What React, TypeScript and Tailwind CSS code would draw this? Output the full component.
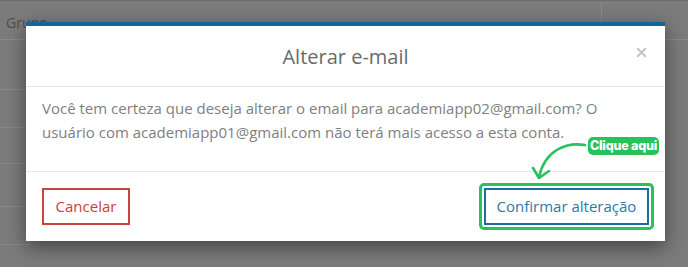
import React from 'react';
import { X } from 'lucide-react';

const font = { fontFamily: '"Open Sans", "Liberation Sans", sans-serif' };

const App: React.FC = () => {
  return (
    <div className="relative w-[688px] h-[267px] overflow-hidden bg-[#7b7b7b]" style={font}>
      {/* dimmed page behind the dialog */}
      <div className="flex flex-col">
        <div className="h-[3px] bg-[#717171] border-b border-[#858585]" />
        <div className="flex h-[37px] border-b border-[#8a8a8a]">
          <div className="flex-1 flex items-center pl-[6px] pt-[3px] text-[14px] text-[#4c4c4c]">Grupo</div>
          <div className="w-[87px] border-l border-[#8a8a8a]" />
        </div>
        <div className="w-[30px] h-[50px] border-b border-[#888]" />
        <div className="w-[30px] h-[38px] border-b border-[#888]" />
        <div className="w-[30px] h-[36px] border-b border-[#888]" />
        <div className="w-[30px] h-[43px] border-b border-[#888]" />
        <div className="w-[30px] h-[38px] border-b border-[#888]" />
      </div>

      {/* dialog */}
      <div className="absolute left-[26px] top-[22px] w-[639px] bg-white border-t-4 border-[#14659c] shadow-[0_6px_18px_rgba(0,0,0,0.45)]">
        <div className="relative h-[61px] flex items-center justify-center border-b border-[#e6e6e6]">
          <h2 className="text-[20px] text-[#6a6a6a] pt-[1px]">Alterar e-mail</h2>
          <button className="absolute right-[16px] top-[19px] text-[#c4c4c4]">
            <X size={15} strokeWidth={3} />
          </button>
        </div>

        <div className="pl-[16px] pr-[20px] pt-[9px] pb-[27px]">
          <p className="text-[15px] leading-[24px] text-[#808080]">
            Você tem certeza que deseja alterar o email para academiapp02@gmail.com? O usuário com academiapp01@gmail.com não terá mais acesso a esta conta.
          </p>
        </div>

        <div className="flex items-center justify-between h-[70px] pl-[16px] pr-[11px] border-t border-[#e6e6e6]">
          <button className="h-[37px] w-[88px] border-2 border-[#c54540] text-[15px] text-[#c9413b]">
            Cancelar
          </button>
          <div className="rounded-[5px] border-[3px] border-[#27c25c] p-[2px]">
            <button className="h-[37px] w-[165px] border-2 border-[#1f6c9e] text-[15px] text-[#2b78ad]">
              Confirmar alteração
            </button>
          </div>
        </div>

        {/* hint badge */}
        <div
          className="absolute left-[562px] top-[111px] h-[18px] w-[71px] rounded-[5px] bg-[#27c25c] flex items-center justify-center text-[12.5px] font-extrabold tracking-[-0.2px] text-white"
          style={{ fontFamily: 'Inter, "Liberation Sans", sans-serif' }}
        >
          Clique aqui
        </div>
        <svg className="absolute left-[502px] top-[112px]" width="62" height="50" viewBox="0 0 62 50" fill="none">
          <path d="M57 7 C 38 4, 17 12, 11 39" stroke="#27c25c" strokeWidth="2.6" strokeLinecap="round" />
          <path d="M5 30 L11 40 L21 33" stroke="#27c25c" strokeWidth="2.6" strokeLinecap="round" strokeLinejoin="round" />
        </svg>
      </div>
    </div>
  );
};

export default App;
